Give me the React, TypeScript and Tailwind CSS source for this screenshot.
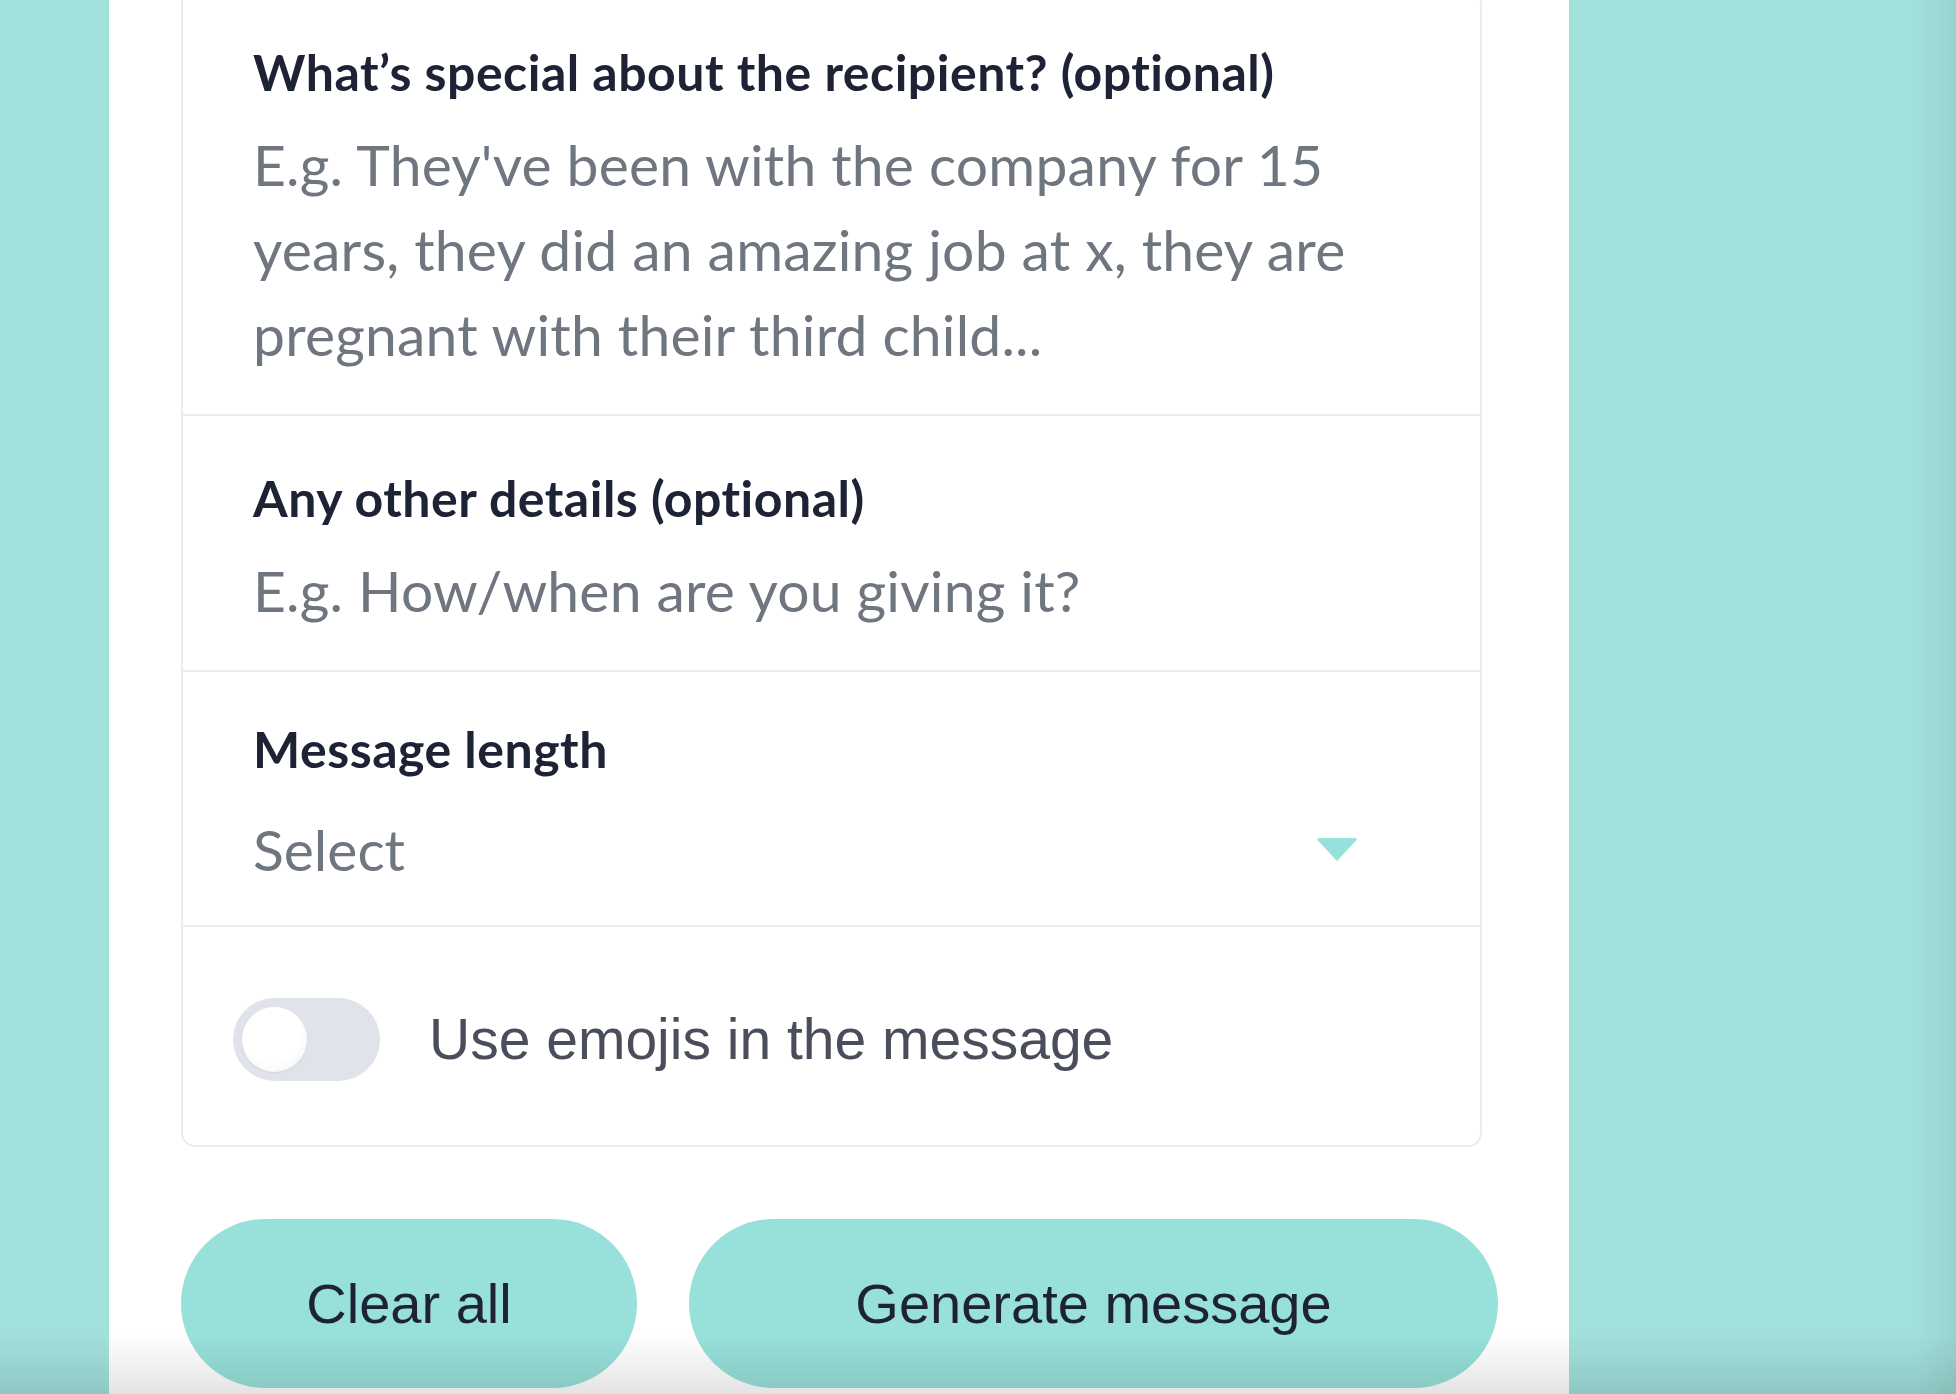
import { useState } from 'react';

const labelFont = { fontFamily: 'Lato, "Noto Sans", sans-serif' };
const uiFont = { fontFamily: '"Liberation Sans", Arial, sans-serif' };

function Field({ label, placeholder }: { label: string; placeholder: string }) {
  return (
    <div className="border-b-2 border-[#ececee] px-[70px] pt-[54px] pb-[37px]">
      <div className="text-[50px] leading-[56px] font-bold tracking-[0.5px] text-[#1e2235]" style={labelFont}>
        {label}
      </div>
      <div className="mt-[22px] text-[57px] leading-[85px] tracking-[0.2px] text-[#6f7680]" style={labelFont}>
        {placeholder}
      </div>
    </div>
  );
}

export default function App() {
  const [emojis, setEmojis] = useState(false);

  return (
    <div className="relative h-[1394px] w-[1956px] overflow-hidden bg-[#a2e0dc]">
      <div className="ml-[109px] flex h-full w-[1460px] flex-col bg-white px-[72px]">
        {/* Form card, scrolled so its top is just off screen */}
        <div className="-mt-[12px] w-[1301px] rounded-[14px] border-2 border-[#ececee]">
          <Field
            label="What’s special about the recipient? (optional)"
            placeholder="E.g. They've been with the company for 15 years, they did an amazing job at x, they are pregnant with their third child..."
          />
          <Field label="Any other details (optional)" placeholder="E.g. How/when are you giving it?" />

          <div className="border-b-2 border-[#ececee] px-[70px] pt-[49px] pb-[33px]">
            <div className="text-[50px] leading-[56px] font-bold tracking-[0.5px] text-[#1e2235]" style={labelFont}>
              Message length
            </div>
            <div className="mt-[30px] flex items-center justify-between pr-[53px]">
              <span className="text-[57px] leading-[85px] text-[#6f7680]" style={labelFont}>
                Select
              </span>
              <svg width="40" height="24" viewBox="0 0 40 24">
                <path d="M0 1.5 Q0 0 3 0 L37 0 Q40 0 40 1.5 L20 23 Z" fill="#98e0da" />
              </svg>
            </div>
          </div>

          <div className="flex items-center gap-[49px] pt-[71px] pb-[64px] pl-[50px]">
            <button
              onClick={() => setEmojis(!emojis)}
              className="flex h-[83px] w-[147px] items-center rounded-full bg-[#e1e3eb] px-[9px]"
            >
              <span className="h-[65px] w-[65px] rounded-full bg-[radial-gradient(circle_at_45%_40%,#ffffff_55%,#eceef3_100%)] shadow-[0_1px_2px_rgba(0,0,0,0.08)]" />
            </button>
            <span className="text-[57px] leading-none text-[#4a4d5c]" style={uiFont}>
              Use emojis in the message
            </span>
          </div>
        </div>

        <div className="mt-[72px] flex gap-[52px]">
          <button
            className="h-[169px] w-[456px] shrink-0 rounded-full bg-[#98e0da] text-[56px] text-[#1e2235]"
            style={uiFont}
          >
            Clear all
          </button>
          <button
            className="h-[169px] w-[809px] shrink-0 rounded-full bg-[#98e0da] text-[56px] text-[#1e2235]"
            style={uiFont}
          >
            Generate message
          </button>
        </div>
      </div>

      {/* bottom fade */}
      <div className="pointer-events-none absolute inset-x-0 bottom-0 h-[60px] bg-gradient-to-b from-transparent to-[rgba(0,0,0,0.11)]" />
      <div className="pointer-events-none absolute top-0 right-0 bottom-0 w-[40px] bg-gradient-to-r from-transparent to-[rgba(0,0,0,0.06)]" />
    </div>
  );
}
